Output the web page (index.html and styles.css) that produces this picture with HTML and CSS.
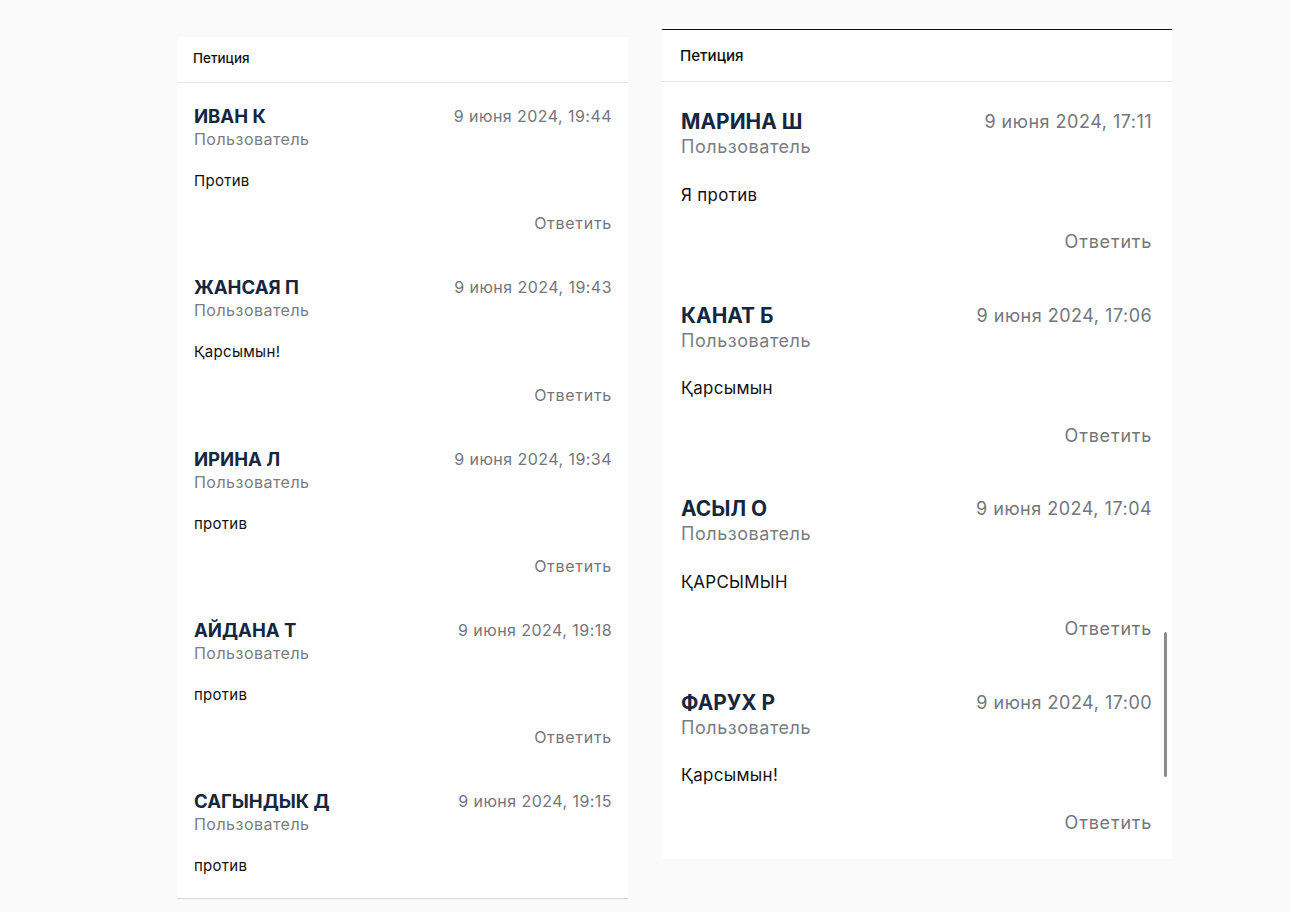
FILE: index.html
```html
<!DOCTYPE html>
<html lang="ru">
<head>
    <meta charset="UTF-8">
    <meta name="viewport" content="width=device-width, initial-scale=1.0">
    <title>Петиция</title>
    <link rel="stylesheet" href="styles.css">
</head>
<body>
    <div class="page">
        <section class="panel panel-left">
            <div class="panel-header">Петиция</div>
            <div class="comment">
                <div class="comment-top">
                    <span class="author">ИВАН К</span>
                    <span class="date">9 июня 2024, 19:44</span>
                </div>
                <div class="role">Пользователь</div>
                <p class="text">Против</p>
                <div class="reply">Ответить</div>
            </div>
            <div class="comment">
                <div class="comment-top">
                    <span class="author">ЖАНСАЯ П</span>
                    <span class="date">9 июня 2024, 19:43</span>
                </div>
                <div class="role">Пользователь</div>
                <p class="text">Қарсымын!</p>
                <div class="reply">Ответить</div>
            </div>
            <div class="comment">
                <div class="comment-top">
                    <span class="author">ИРИНА Л</span>
                    <span class="date">9 июня 2024, 19:34</span>
                </div>
                <div class="role">Пользователь</div>
                <p class="text">против</p>
                <div class="reply">Ответить</div>
            </div>
            <div class="comment">
                <div class="comment-top">
                    <span class="author">АЙДАНА Т</span>
                    <span class="date">9 июня 2024, 19:18</span>
                </div>
                <div class="role">Пользователь</div>
                <p class="text">против</p>
                <div class="reply">Ответить</div>
            </div>
            <!-- last one is cut by the scroll box, reply is below the fold -->
            <div class="comment">
                <div class="comment-top">
                    <span class="author">САГЫНДЫК Д</span>
                    <span class="date">9 июня 2024, 19:15</span>
                </div>
                <div class="role">Пользователь</div>
                <p class="text">против</p>
            </div>
        </section>

        <section class="panel panel-right">
            <div class="panel-header">Петиция</div>
            <div class="comment">
                <div class="comment-top">
                    <span class="author">МАРИНА Ш</span>
                    <span class="date">9 июня 2024, 17:11</span>
                </div>
                <div class="role">Пользователь</div>
                <p class="text">Я против</p>
                <div class="reply">Ответить</div>
            </div>
            <div class="comment">
                <div class="comment-top">
                    <span class="author">КАНАТ Б</span>
                    <span class="date">9 июня 2024, 17:06</span>
                </div>
                <div class="role">Пользователь</div>
                <p class="text">Қарсымын</p>
                <div class="reply">Ответить</div>
            </div>
            <div class="comment">
                <div class="comment-top">
                    <span class="author">АСЫЛ О</span>
                    <span class="date">9 июня 2024, 17:04</span>
                </div>
                <div class="role">Пользователь</div>
                <p class="text">ҚАРСЫМЫН</p>
                <div class="reply">Ответить</div>
            </div>
            <div class="comment">
                <div class="comment-top">
                    <span class="author">ФАРУХ Р</span>
                    <span class="date">9 июня 2024, 17:00</span>
                </div>
                <div class="role">Пользователь</div>
                <p class="text">Қарсымын!</p>
                <div class="reply">Ответить</div>
            </div>
            <div class="scrollbar"></div>
        </section>
    </div>
</body>
</html>
```

FILE: styles.css
```css
body {
    margin: 0;
    font-family: Inter, "Noto Sans", sans-serif;
    background-color: #fafafa;
}

.page {
    display: flex;
    align-items: flex-start;
    gap: 34px;
    padding-left: 177px;
}

.panel {
    position: relative;
    background-color: #fff;
    overflow: hidden;
}

.panel-left {
    font-size: 16px;
    width: 451px;
    height: 861px;
    margin-top: 37px;
    border-bottom: 1px solid #d6d6d6;
}

.panel-right {
    font-size: 18px;
    width: 510px;
    height: 829px;
    margin-top: 29px;
    border-top: 1px solid #111;
}

.panel-header {
    font-size: 0.84em;
    font-weight: 500;
    color: #111;
    height: 3.35em;
    line-height: 3.125em;
    padding: 0 1.19em;
    border-bottom: 1px solid #e6e6e6;
}

.panel-right .panel-header {
    height: 3.37em;
    line-height: 3.4em;
}

.comment {
    padding: 1.31em 1em 1.25em 1.06em;
}

.panel-right .comment {
    padding: 1.47em 1.1em 1.13em 1.06em;
}

.comment-top {
    display: flex;
    justify-content: space-between;
    align-items: center;
    height: 1.5em;
}

.author {
    font-size: 1.16em;
    font-weight: 700;
    color: #14273f;
}

.date {
    font-size: 1em;
    letter-spacing: 0.028em;
    color: #73767d;
}

.role {
    font-size: 1em;
    line-height: 1.375em;
    letter-spacing: 0.03em;
    color: #7a7d83;
}

.text {
    margin: 1.4em 0 0;
    font-size: 0.9375em;
    line-height: 1.35em;
    letter-spacing: 0.02em;
    color: #111;
}

.reply {
    margin-top: 1.32em;
    text-align: right;
    font-size: 1em;
    line-height: 1.375em;
    letter-spacing: 0.045em;
    color: #73767d;
}

.scrollbar {
    position: absolute;
    right: 5px;
    top: 602px;
    width: 3px;
    height: 145px;
    border-radius: 2px;
    background-color: #8c8c8c;
}
```
